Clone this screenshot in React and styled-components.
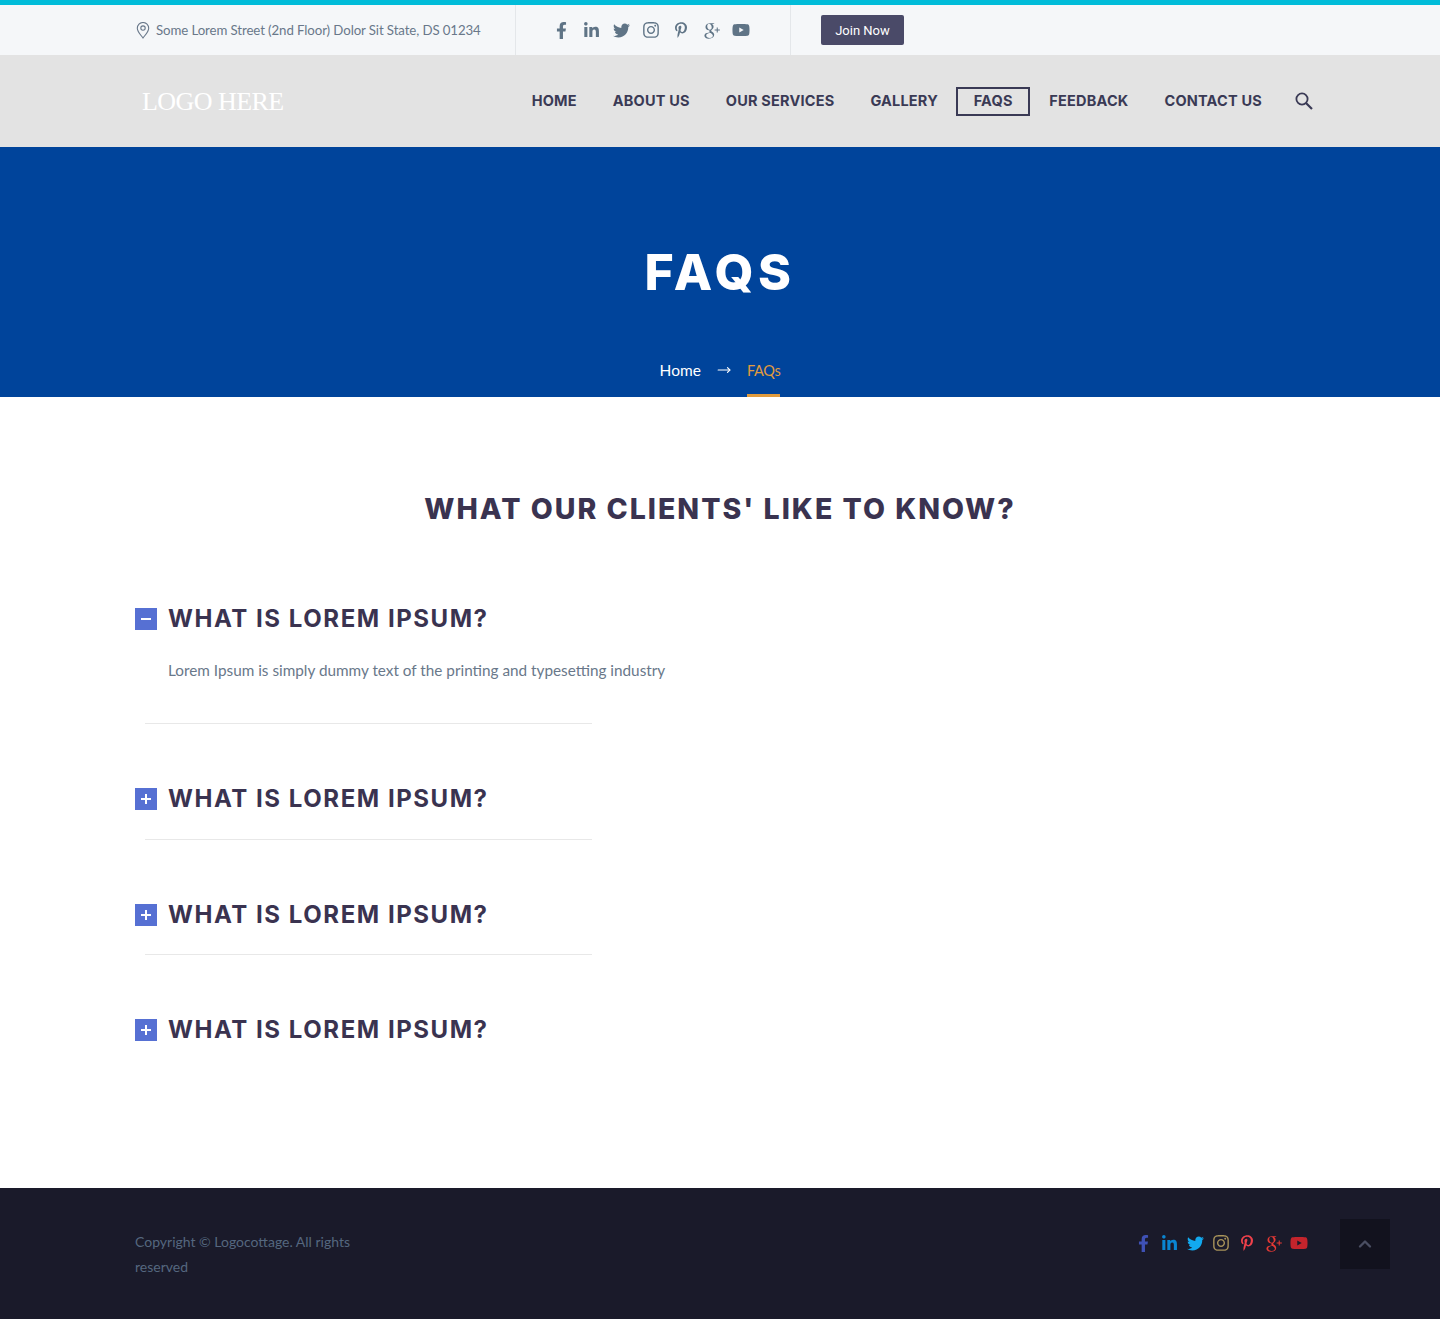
import React from 'react';
import styled, { createGlobalStyle } from 'styled-components';
import { FaFacebookF, FaLinkedinIn, FaTwitter, FaInstagram, FaPinterestP, FaYoutube } from 'react-icons/fa';
import { TiSocialGooglePlus } from 'react-icons/ti';
import { ChevronUp, MoveRight } from 'lucide-react';

const GlobalStyle = createGlobalStyle`
	* { box-sizing: border-box; }
	body {
		margin: 0;
		background: #fff;
		font-family: 'Lato', 'Noto Sans', sans-serif;
	}
`;

const socials = [
	{ Icon: FaFacebookF, name: 'facebook', color: '#3f51b5', size: 17 },
	{ Icon: FaLinkedinIn, name: 'linkedin', color: '#0a85d1', size: 17 },
	{ Icon: FaTwitter, name: 'twitter', color: '#12a9ef', size: 17 },
	{ Icon: FaInstagram, name: 'instagram', color: '#a8935a', size: 18 },
	{ Icon: FaPinterestP, name: 'pinterest', color: '#f0414b', size: 16 },
	{ Icon: TiSocialGooglePlus, name: 'google', color: '#e53935', size: 25 },
	{ Icon: FaYoutube, name: 'youtube', color: '#c4242c', size: 18 },
];

const menu = ['HOME', 'ABOUT US', 'OUR SERVICES', 'GALLERY', 'FAQS', 'FEEDBACK', 'CONTACT US'];

const faqs = [
	{ id: 1, open: true, divider: true },
	{ id: 2, open: false, divider: true },
	{ id: 3, open: false, divider: true },
	{ id: 4, open: false, divider: false },
];

function Pin() {
	return (
		<svg width='14' height='17' viewBox='0 0 14 17' fill='none' stroke='#69788a' strokeWidth='1.1'>
			<path d='M7 16C4.5 12.6 1.3 9.6 1.3 6.2a5.7 5.7 0 0 1 11.4 0C12.7 9.6 9.5 12.6 7 16z' />
			<circle cx='7' cy='6.1' r='2.2' />
		</svg>
	);
}

function SearchGlyph() {
	return (
		<svg width='18' height='18' viewBox='0 0 18 18' fill='none' stroke='#3a3a55' strokeWidth='1.8'>
			<circle cx='7' cy='7' r='5.6' />
			<path d='M11 11l6 6' strokeWidth='2.2' />
		</svg>
	);
}

export default function App() {
	return (
		<div>
			<GlobalStyle />
			<TopBar>
				<Address>
					<Pin />
					<span>Some Lorem Street (2nd Floor) Dolor Sit State, DS 01234</span>
				</Address>
				<TopSocials>
					{socials.map(({ Icon, name, size }) => (
						<SocialSlot key={name}>
							<Icon size={size} color='#5f7486' />
						</SocialSlot>
					))}
				</TopSocials>
				<JoinCell>
					<JoinButton>Join Now</JoinButton>
				</JoinCell>
			</TopBar>

			<NavBar>
				<Logo>LOGO HERE</Logo>
				<Menu>
					{menu.map(item => (
						<MenuItem key={item} $active={item === 'FAQS'}>
							{item}
						</MenuItem>
					))}
					<SearchSlot>
						<SearchGlyph />
					</SearchSlot>
				</Menu>
			</NavBar>

			<Hero>
				<HeroTitle>FAQS</HeroTitle>
				<Crumbs>
					<Crumb>Home</Crumb>
					<MoveRight size={14} color='#fff' strokeWidth={2} />
					<CurrentCrumb>FAQs</CurrentCrumb>
				</Crumbs>
			</Hero>

			<Content>
				<SectionTitle>WHAT OUR CLIENTS' LIKE TO KNOW?</SectionTitle>
				{faqs.map(faq => (
					<div key={faq.id}>
						<Question>
							<Toggle>{faq.open ? <Minus /> : <Plus />}</Toggle>
							<QuestionText>WHAT IS LOREM IPSUM?</QuestionText>
						</Question>
						{faq.open && (
							<Answer>Lorem Ipsum is simply dummy text of the printing and typesetting industry</Answer>
						)}
						{faq.divider && <Divider $open={faq.open} />}
					</div>
				))}
			</Content>

			<Footer>
				<Copyright>Copyright © Logocottage. All rights reserved</Copyright>
				<FooterSocials>
					{socials.map(({ Icon, name, color, size }) => (
						<FooterSlot key={name}>
							<Icon size={size} color={color} />
						</FooterSlot>
					))}
				</FooterSocials>
				<BackToTop>
					<ChevronUp size={20} color='#4a4e62' strokeWidth={2.8} />
				</BackToTop>
			</Footer>
		</div>
	);
}

const TopBar = styled.div`
	display: flex;
	height: 55px;
	padding-left: 135px;
	background: #f5f7f9;
	border-top: 5px solid #00bcd9;
`;

const Address = styled.div`
	display: flex;
	align-items: center;
	gap: 6px;
	width: 381px;
	padding-left: 1px;
	border-right: 1px solid #e4e7ea;
	font-size: 13.25px;
	color: #69788a;
	letter-spacing: -0.1px;
`;

const TopSocials = styled.div`
	display: flex;
	align-items: center;
	width: 275px;
	padding-left: 30px;
	border-right: 1px solid #e4e7ea;
`;

const SocialSlot = styled.span`
	display: flex;
	justify-content: center;
	width: 30px;
`;

const JoinCell = styled.div`
	display: flex;
	align-items: center;
	padding-left: 30px;
`;

const JoinButton = styled.button`
	width: 83px;
	height: 30px;
	padding: 0;
	border: 0;
	border-radius: 2px;
	background: #4a4a68;
	color: #fff;
	font-family: 'Roboto', sans-serif;
	font-size: 13px;
`;

const NavBar = styled.div`
	display: flex;
	align-items: center;
	justify-content: space-between;
	height: 92px;
	padding: 0 127px 0 142px;
	background: #e3e3e3;
`;

const Logo = styled.div`
	padding-top: 2px;
	font-family: 'Liberation Serif', serif;
	font-size: 26px;
	color: #fff;
	letter-spacing: -0.55px;
`;

const Menu = styled.nav`
	display: flex;
	align-items: center;
`;

const MenuItem = styled.a`
	display: block;
	margin-right: ${props => (props.$active ? '1px' : '0')};
	padding: ${props => (props.$active ? '3.5px 15.7px' : '5.5px 18px')};
	border: ${props => (props.$active ? '2px solid #3a3a55' : '0')};
	font-family: 'Inter', sans-serif;
	font-size: 14.5px;
	font-weight: 700;
	line-height: 18px;
	letter-spacing: 0.2px;
	color: #3a3a55;
`;

const SearchSlot = styled.span`
	display: flex;
	margin-left: 15px;
`;

const Hero = styled.div`
	display: flex;
	flex-direction: column;
	align-items: center;
	height: 250px;
	padding-top: 93px;
	background: #00449b;
	color: #fff;
`;

const HeroTitle = styled.h1`
	margin: 0;
	font-family: 'Inter', sans-serif;
	font-size: 50px;
	font-weight: 800;
	line-height: 64px;
	letter-spacing: 4.5px;
`;

const Crumbs = styled.div`
	display: flex;
	align-items: center;
	gap: 16px;
	height: 54px;
	margin-top: 39px;
	font-size: 15.5px;
`;

const Crumb = styled.span`
	color: #fff;
`;

const CurrentCrumb = styled.span`
	display: flex;
	align-items: center;
	height: 54px;
	padding-top: 3px;
	font-size: 14.5px;
	letter-spacing: -0.3px;
	color: #e09b3d;
	border-bottom: 3px solid #e09b3d;
`;

const Content = styled.div`
	height: 791px;
	padding: 93px 135px 0;
`;

const SectionTitle = styled.h2`
	margin: 0 0 74px;
	font-family: 'Inter', sans-serif;
	font-size: 28.5px;
	font-weight: 800;
	line-height: 38px;
	letter-spacing: 2px;
	text-align: center;
	color: #3a3350;
`;

const Question = styled.div`
	display: flex;
	align-items: center;
	gap: 11px;
	height: 34px;
`;

const Toggle = styled.span`
	display: flex;
	align-items: center;
	justify-content: center;
	width: 22px;
	height: 22px;
	background: #5670d3;
`;

const Minus = styled.i`
	display: block;
	width: 10px;
	height: 2px;
	background: #fff;
`;

const Plus = styled(Minus)`
	position: relative;
	&::after {
		content: '';
		position: absolute;
		left: 4px;
		top: -4px;
		width: 2px;
		height: 10px;
		background: #fff;
	}
`;

const QuestionText = styled.h3`
	margin: 0;
	font-family: 'Inter', sans-serif;
	font-size: 24px;
	font-weight: 700;
	line-height: 34px;
	letter-spacing: 1.55px;
	color: #3a3350;
`;

const Answer = styled.p`
	margin: 22px 0 0 33px;
	font-size: 15.3px;
	line-height: 24px;
	color: #69788a;
`;

const Divider = styled.div`
	width: 447px;
	height: 1px;
	margin: ${props => (props.$open ? '41px 0 58px 10px' : '22.5px 0 58px 10px')};
	background: #e8e8e8;
`;

const Footer = styled.footer`
	display: flex;
	align-items: flex-start;
	height: 131px;
	padding: 31px 50px 0 135px;
	background: #1a1a2a;
`;

const Copyright = styled.p`
	width: 240px;
	margin: 10px 0 0;
	font-size: 14px;
	line-height: 25px;
	color: #55677f;
`;

const FooterSocials = styled.div`
	display: flex;
	align-items: center;
	height: 48px;
	margin-left: auto;
	margin-right: 15px;
`;

const FooterSlot = styled.span`
	display: flex;
	justify-content: center;
	width: 26px;
`;

const BackToTop = styled.div`
	display: flex;
	align-items: center;
	justify-content: center;
	width: 50px;
	height: 50px;
	margin-left: 13px;
	background: #12121e;
`;
